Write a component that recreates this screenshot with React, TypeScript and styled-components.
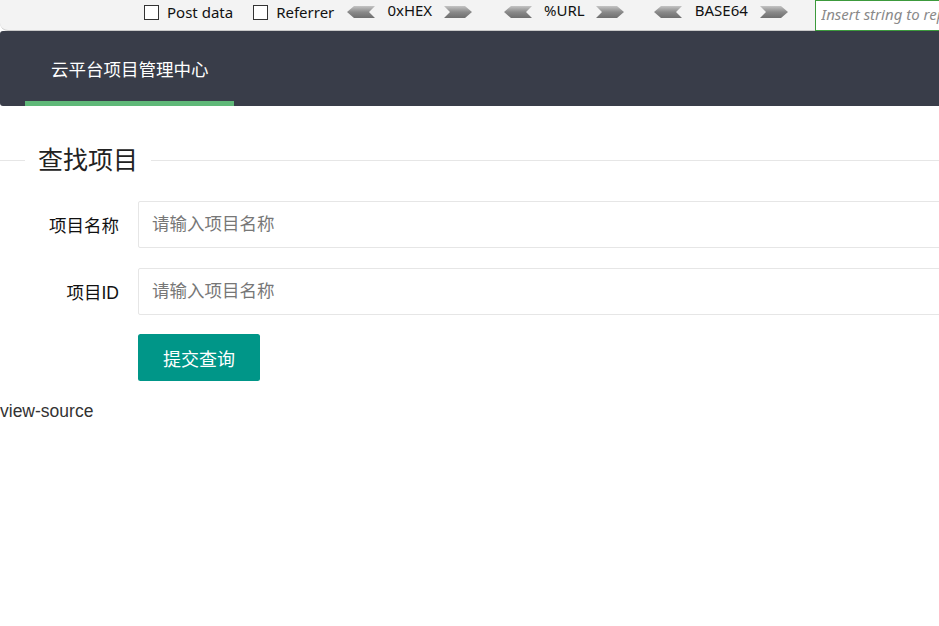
import styled, { createGlobalStyle } from "styled-components";

const GlobalStyle = createGlobalStyle`
  html, body {
    margin: 0;
    padding: 0;
    overflow: hidden;
    background: #fff;
  }
  * {
    box-sizing: border-box;
  }
`;

const Page = styled.div`
  width: 1200px;
  font-family: "Liberation Sans", "Noto Sans CJK SC", sans-serif;
  color: #333;
`;

// extension toolbar on top
const Toolbar = styled.div`
  display: flex;
  align-items: flex-start;
  height: 31px;
  padding-left: 144px;
  background: #f3f3f3;
  border-bottom: 1px solid #c9c9c9;
  border-bottom-left-radius: 8px;
  font-family: "Noto Sans", "Open Sans", sans-serif;
  font-size: 15px;
  color: #111;
`;

const Check = styled.label<{ $gap: number }>`
  display: flex;
  align-items: center;
  gap: 8px;
  height: 16px;
  margin-top: 4px;
  margin-right: ${(p) => p.$gap}px;
  line-height: 1;
`;

const Box = styled.span`
  display: inline-block;
  width: 15px;
  height: 15px;
  border: 1px solid #333;
  background: #fff;
`;

const Group = styled.div<{ $gap: number }>`
  display: flex;
  align-items: center;
  height: 16px;
  margin-top: 4px;
  margin-right: ${(p) => p.$gap}px;
`;

const GroupText = styled.span<{ $w: number }>`
  width: ${(p) => p.$w}px;
  text-align: center;
  line-height: 1;
  padding-bottom: 3px;
`;

const ToolInput = styled.input`
  flex: 1;
  align-self: stretch;
  height: 31px;
  border: 1px solid #3c9a3c;
  background: #fff;
  padding: 0 5px 4px;
  font-family: "Noto Sans", "Open Sans", sans-serif;
  font-size: 15px;
  outline: none;

  &::placeholder {
    color: #8a8a8a;
    font-style: italic;
  }
`;

function Arrow({ dir }: { dir: "left" | "right" }) {
  const pts =
    dir === "left"
      ? "0,6 7,0 28,0 22,6 28,12 7,12"
      : "0,0 21,0 28,6 21,12 0,12 6,6";
  return (
    <svg width="28" height="13" viewBox="0 0 28 13">
      <defs>
        <linearGradient id={`g-${dir}`} x1="0" y1="0" x2="0" y2="1">
          <stop offset="0" stopColor="#c4c4c4" />
          <stop offset="0.5" stopColor="#8a8a8a" />
          <stop offset="1" stopColor="#6f6f6f" />
        </linearGradient>
      </defs>
      <polygon points={pts} fill={`url(#g-${dir})`} />
    </svg>
  );
}

// layui-like header
const Header = styled.div`
  display: flex;
  height: 75px;
  background: #393d49;
  border-radius: 3px 0 0 3px;
`;

const NavItem = styled.div<{ $active?: boolean }>`
  display: flex;
  align-items: center;
  margin-left: 25px;
  padding: 4px 25px 0 26px;
  height: 75px;
  color: #fff;
  font-size: 17.5px;
  border-bottom: 5px solid ${(p) => (p.$active ? "#5fb878" : "transparent")};
`;

const Title = styled.div`
  display: flex;
  align-items: center;
  margin-top: 38px;
`;

const Line = styled.div<{ $w?: number }>`
  height: 1px;
  background: #e6e6e6;
  ${(p) => (p.$w ? `width: ${p.$w}px;` : "flex: 1;")}
`;

const Legend = styled.span`
  padding: 0 13px;
  font-size: 25px;
  line-height: 33px;
  color: #222;
`;

const Form = styled.div`
  margin-top: 24px;
`;

const Item = styled.div`
  display: flex;
  align-items: center;
  margin-bottom: 19.5px;
`;

const Label = styled.label`
  width: 138px;
  padding-right: 19px;
  text-align: right;
  font-size: 17.5px;
  color: #111;
`;

const Input = styled.input`
  width: 900px;
  height: 47px;
  padding-left: 13px;
  border: 1px solid #e6e6e6;
  border-radius: 2px;
  font-family: "Liberation Sans", "Noto Sans CJK SC", sans-serif;
  font-size: 17.5px;
  outline: none;

  &::placeholder {
    color: #777;
  }
`;

const Button = styled.button`
  margin-left: 138px;
  height: 47px;
  padding: 0 25px;
  border: none;
  border-radius: 2.5px;
  background: #009688;
  color: #fff;
  font-family: "Liberation Sans", "Noto Sans CJK SC", sans-serif;
  font-size: 18px;
`;

const Source = styled.div`
  margin-top: 20px;
  font-size: 17.5px;
  color: #333;
`;

const groups = [
  { text: "0xHEX", w: 69, gap: 32 },
  { text: "%URL", w: 64, gap: 30 },
  { text: "BASE64", w: 78, gap: 27 },
];

export default function App() {
  return (
    <Page>
      <GlobalStyle />
      <Toolbar>
        <Check $gap={20}>
          <Box />
          Post data
        </Check>
        <Check $gap={13}>
          <Box />
          Referrer
        </Check>
        {groups.map((g) => (
          <Group key={g.text} $gap={g.gap}>
            <Arrow dir="left" />
            <GroupText $w={g.w}>{g.text}</GroupText>
            <Arrow dir="right" />
          </Group>
        ))}
        <ToolInput placeholder="Insert string to replace" />
      </Toolbar>
      <Header>
        <NavItem $active>云平台项目管理中心</NavItem>
      </Header>
      <Title>
        <Line $w={25} />
        <Legend>查找项目</Legend>
        <Line />
      </Title>
      <Form>
        <Item>
          <Label>项目名称</Label>
          <Input placeholder="请输入项目名称" />
        </Item>
        <Item>
          <Label>项目ID</Label>
          <Input placeholder="请输入项目名称" />
        </Item>
        <Button>提交查询</Button>
      </Form>
      <Source>view-source</Source>
    </Page>
  );
}
